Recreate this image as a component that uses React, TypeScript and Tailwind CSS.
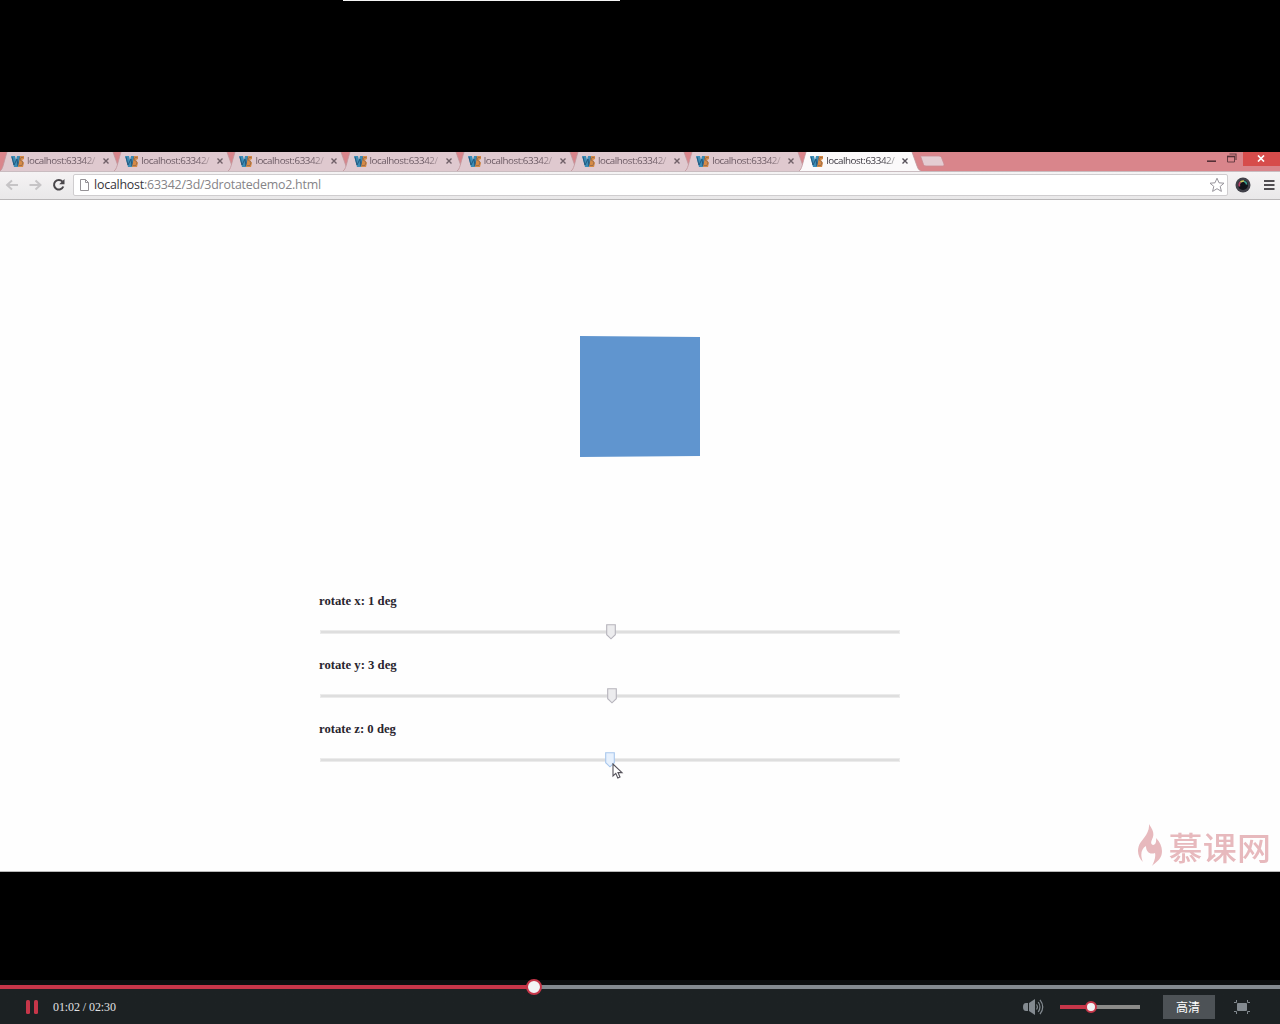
const tabs = [0, 1, 2, 3, 4, 5, 6, 7];

function Favicon() {
  return (
    <svg className="h-[13px] w-[14px] shrink-0" viewBox="0 0 14 13">
      <path d="M0 1h4l1 4 1-4h3v11H3z" fill="#3b8cb5" />
      <path d="M1 2l2 8 3-6 1 7 2-9" fill="none" stroke="#23597f" strokeWidth="1" />
      <path d="M9 1h4v3l-2 1 2 3-1 4H7l1-5z" fill="#d78a45" />
      <path d="M12.500 2.500H10L9 5l3 2-1 3.500H8" fill="none" stroke="#94694b" strokeWidth=".8" />
    </svg>
  );
}

function Tab({ active }: { active: boolean }) {
  return (
    <div className="relative h-[19px] w-[114.2px] shrink-0">
      <svg className="absolute left-0 top-0 h-[19px] w-[123px]" viewBox="0 0 123 19">
        <path d="M0 19C3 17 3 13 7 0H113L118 14Q119 18 122 19Z" fill={active ? "#fbf9fa" : "#dfc9cf"} />
        <path d="M0 19C3 17 3 13 7 0M113 0L118 14Q119 18 122 19" fill="none" stroke="#c0959c" strokeWidth=".8" />
      </svg>
      <div className="relative flex h-[18px] items-center pl-[11px]">
        <Favicon />
        <span
          className={
            "ml-[2px] w-[70px] whitespace-nowrap bg-clip-text font-['Open_Sans',sans-serif] text-[9.8px] font-medium leading-[16px] tracking-[-0.45px] text-transparent " +
            (active
              ? "bg-[linear-gradient(90deg,#35313a_80%,#bbb_100%)]"
              : "bg-[linear-gradient(90deg,#675660_80%,#c4afb5_100%)]")
          }
        >
          localhost:63342/
        </span>
        <svg className="ml-[6px] h-[6px] w-[6px]" viewBox="0 0 6 6">
          <path d="M.5.5l5 5m0-5l-5 5" stroke={active ? "#57515a" : "#706068"} strokeWidth="1.4" />
        </svg>
      </div>
    </div>
  );
}

function TabStrip() {
  return (
    <div className="flex h-[19px] shrink-0 overflow-hidden bg-[#d9858b]">
      {tabs.map((t) => (
        <Tab key={t} active={t === 7} />
      ))}
      <svg className="ml-[5px] mt-[3px] h-[12px] w-[26px]" viewBox="0 0 26 12">
        <path d="M1.500 1H20q2 0 2.500 1.500L25 9q.5 2-1 2H7Q5 11 4.500 9.500Z" fill="#e4ccd2" stroke="#c98a92" strokeWidth=".8" />
      </svg>
      <div className="ml-auto flex">
        <svg className="h-[14px] w-[43px]" viewBox="0 0 43 14">
          <path d="M7 9.200h9" stroke="#542f36" strokeWidth="1.600" />
          <path d="M29.500 2h6.500v6" fill="none" stroke="#6a3e44" strokeWidth="1.200" />
          <path d="M27.500 4.500h7v5.500h-7z" fill="none" stroke="#6a3e44" strokeWidth="1" />
          <path d="M27 4.500h8" stroke="#542f36" strokeWidth="1.600" />
        </svg>
        <div className="flex h-[14px] w-[37px] items-center justify-center bg-[#d64c4b]">
          <svg className="mr-[1px] mt-[-2px] h-[7px] w-[8px]" viewBox="0 0 8 7">
            <path d="M1 .5l6 6m0-6l-6 6" stroke="#fff" strokeWidth="1.700" />
          </svg>
        </div>
      </div>
    </div>
  );
}

function Toolbar() {
  return (
    <div className="flex h-[29px] shrink-0 items-center border-b border-t border-b-[#b9b7b8] border-t-[#c9bcc0] bg-[linear-gradient(#f5f3f4,#e9e8e9)] pb-px">
      <svg className="h-[20px] w-[73px] shrink-0" viewBox="0 0 73 20" fill="none">
        <path d="M18 10H7m5-4.500L7 10l5 4.500M29.500 10h11m-5-4.500l5 4.500-5 4.500" stroke="#c6c4c6" strokeWidth="1.900" />
        <path d="M62.500 6.600A4.800 4.800 0 1 0 63.300 11.500" stroke="#49464a" strokeWidth="2" />
        <path d="M64.500 4v5.200h-5.300z" fill="#49464a" />
      </svg>
      <div className="flex h-[22px] w-[1155px] shrink-0 items-center rounded-[2px] border border-[#cfcdcf] bg-white pl-[6px] pr-[2px]">
        <svg className="h-[12px] w-[9px]" viewBox="0 0 9 12">
          <path d="M.5.5h5l3 3v8h-8zM5.500.5v3h3" fill="#fff" stroke="#959296" />
        </svg>
        <span className="ml-[5px] whitespace-nowrap font-['Open_Sans',sans-serif] text-[12.4px] leading-[18px] tracking-[-0.21px] text-[#858387]">
          <span className="text-[#37343b]">localhost</span>:63342/3d/3drotatedemo2.html
        </span>
        <svg className="ml-auto h-[16px] w-[16px]" viewBox="0 0 16 16">
          <path d="M8 1.200l2 4.600 5 .4-3.800 3.200 1.200 5L8 11.700l-4.400 2.700 1.200-5L1 6.200l5-.4z" fill="#fff" stroke="#97949b" />
        </svg>
      </div>
      <svg className="ml-[7px] h-[16px] w-[16px]" viewBox="0 0 16 16" fill="none">
        <circle cx="8" cy="8" r="7.500" fill="#42424a" />
        <circle cx="8" cy="8" r="5" fill="#111319" />
        <path d="M4.500 9.500A4 4 0 0 1 5.500 5" stroke="#b5476d" strokeWidth="1.700" />
        <path d="M5.500 5a4 4 0 0 1 3.500-.8" stroke="#c9c460" strokeWidth="1.700" />
        <path d="M9 4.200A4 4 0 0 1 11.700 7.500" stroke="#3da293" strokeWidth="1.700" />
      </svg>
      <svg className="ml-[13px] h-[12px] w-[11px]" viewBox="0 0 11 12">
        <path d="M0 2h10.500M0 6h10.500M0 10h10.500" stroke="#504d51" strokeWidth="2" />
      </svg>
    </div>
  );
}

const rows = [
  { label: "rotate x: 1 deg", thumb: 286, hover: false },
  { label: "rotate y: 3 deg", thumb: 287.5, hover: false },
  { label: "rotate z: 0 deg", thumb: 285, hover: true },
];

function SliderRow({ label, thumb, hover }: { label: string; thumb: number; hover: boolean }) {
  return (
    <div className="h-[64.2px]">
      <div className="h-[16px] whitespace-nowrap font-['Liberation_Serif',serif] text-[12.7px] font-bold leading-[16px] text-[#29252e]">
        {label}
      </div>
      <div className="relative ml-[1px] mt-[20.8px] h-[4px] w-[580px] border border-[#ebebeb] bg-[#dedede]">
        <svg className="absolute top-[-7px] h-[16px] w-[10px]" style={{ left: thumb - 1.5 }} viewBox="0 0 10 16">
          <path
            d="M.7.700h8.600v10L5 14.800.7 10.700z"
            fill={hover ? "#e7f1fd" : "#ececee"}
            stroke={hover ? "#a8c7ed" : "#b6b4bc"}
            strokeWidth="1.100"
          />
        </svg>
        {hover && (
          <svg className="absolute left-[290.5px] top-[4px] h-[17px] w-[12px]" viewBox="0 0 12 17">
            <path d="M1 1v12l2.800-2.600 2 4.600 2.200-1-2-4.400h4z" fill="#fff" stroke="#55525a" strokeWidth="1.100" />
          </svg>
        )}
      </div>
    </div>
  );
}

function Watermark() {
  return (
    <div className="flex h-[44px] w-[132px] items-center text-[#e7b9bd]">
      <svg className="h-[44px] w-[25px] shrink-0" viewBox="0 0 25 44" fill="currentColor">
        <path d="M11 0C15 6 16 9 15 13C14 16 12.500 17.500 13.500 20C15.500 22.500 19 20 18 14C23 19 25 25 23.500 31C22 36 17 39 14 42C16 38 18 33 17 29C12 31 8 28 8 22C3 25 2 31 5 38C1 34-1 29 .5 23C2 16 12 11 11 0z" />
      </svg>
      <span className="ml-[5.500px] mt-[2px] origin-left scale-y-[.95] whitespace-nowrap font-['Noto_Sans_CJK_SC',sans-serif] text-[34px] font-medium leading-[40px] tracking-[0.2px]">
        慕课网
      </span>
    </div>
  );
}

function Player() {
  return (
    <div className="h-[44px] shrink-0 bg-gradient-to-b from-[#0b0e0f] from-[12%] to-[#1c2123] to-[12%]">
      <div className="relative top-[5px] flex h-[4px] bg-[#838a90]">
        <div className="h-[4px] w-[534px] bg-[#c63649]" />
        <div className="absolute left-[526px] top-[-6px] h-[16px] w-[16px] rounded-full border-2 border-[#c63649] bg-[#f2f3f5]" />
      </div>
      <div className="mt-[5px] flex h-[36px] items-center">
        <svg className="ml-[26px] h-[14px] w-[12px]" viewBox="0 0 12 14" fill="#c63649">
          <rect width="4" height="14" rx="1.500" />
          <rect x="8" width="4" height="14" rx="1.500" />
        </svg>
        <span className="ml-[15px] whitespace-nowrap font-['Liberation_Serif',serif] text-[12px] leading-[16px] tracking-[-0.08px] text-[#e0e2e3]">
          01:02 / 02:30
        </span>
        <svg className="ml-auto h-[16px] w-[21px]" viewBox="0 0 21 16">
          <path d="M3 4h2v8H3Q0 12 0 8t3-4zM6 4l6-4v16l-6-4z" fill="#838a90" />
          <path d="M13.500 5.500q1.800 2.500 0 5M15.200 3q3.500 5 0 10M17 .8q5.500 7.200 0 14.400" fill="none" stroke="#838a90" strokeWidth="1.200" />
        </svg>
        <div className="relative ml-[16px] flex h-[4px] w-[80px] bg-[#8b8b89]">
          <div className="h-[4px] w-[31px] bg-[#c63649]" />
          <div className="absolute left-[25px] top-[-4px] h-[12px] w-[12px] rounded-full border-2 border-[#c63649] bg-[#f2f3f5]" />
        </div>
        <div className="ml-[23px] flex h-[24px] w-[52px] items-center justify-center bg-[#4d5256] pr-[2px] font-['Noto_Sans_CJK_SC',sans-serif] text-[12px] leading-[18px] text-white">
          高清
        </div>
        <svg className="ml-[19px] mr-[30px] h-[14px] w-[16px]" viewBox="0 0 16 14">
          <rect x="3" y="3" width="10" height="8" rx="1" fill="#838a90" />
          <path d="M0 2.500h2.500V0M13.500 0v2.500H16M16 11.500h-2.500V14M2.500 14v-2.500H0" fill="none" stroke="#838a90" />
        </svg>
      </div>
    </div>
  );
}

export default function App() {
  return (
    <div className="flex h-[1024px] w-[1280px] flex-col overflow-hidden bg-black">
      <div className="h-[152px] shrink-0">
        <div className="ml-[343px] h-px w-[277px] bg-[#f4f4f4]" />
      </div>
      <TabStrip />
      <Toolbar />
      <main className="relative h-[672px] shrink-0 border-b border-[#b8b8b8] bg-[#fefefe] pt-[136px]">
        <div className="ml-[580px] h-[121px] w-[120px] bg-[#6095cf] [clip-path:polygon(0_0,100%_1px,100%_120px,0_100%)]" />
        <div className="ml-[319px] mt-[136.1px]">
          {rows.map((r) => (
            <SliderRow key={r.label} {...r} />
          ))}
        </div>
        <div className="absolute bottom-[3px] right-[10px]">
          <Watermark />
        </div>
      </main>
      <div className="h-[108px] shrink-0" />
      <Player />
    </div>
  );
}
